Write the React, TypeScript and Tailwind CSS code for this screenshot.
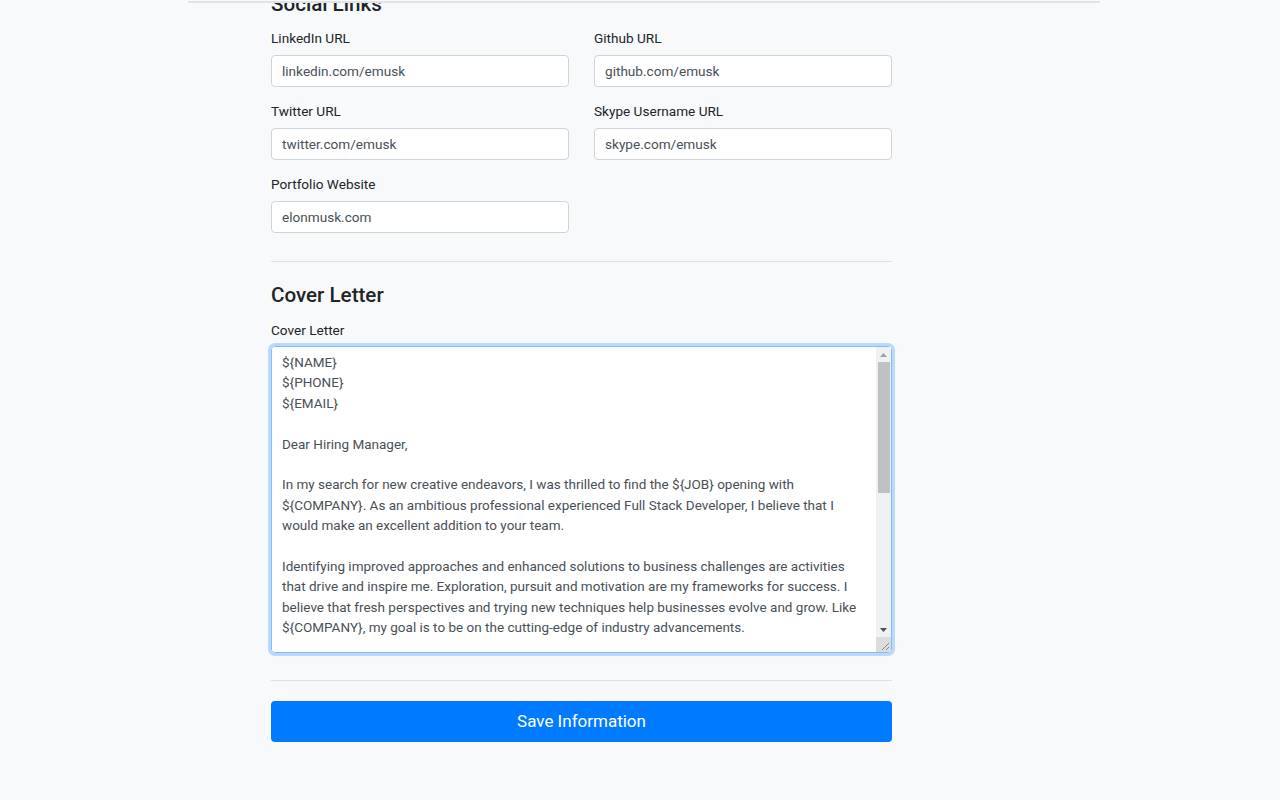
const COVER_LETTER = `\${NAME}
\${PHONE}
\${EMAIL}

Dear Hiring Manager,

In my search for new creative endeavors, I was thrilled to find the \${JOB} opening with \${COMPANY}. As an ambitious professional experienced Full Stack Developer, I believe that I would make an excellent addition to your team.

Identifying improved approaches and enhanced solutions to business challenges are activities that drive and inspire me. Exploration, pursuit and motivation are my frameworks for success. I believe that fresh perspectives and trying new techniques help businesses evolve and grow. Like \${COMPANY}, my goal is to be on the cutting-edge of industry advancements.

Throughout my career I have built and shipped web applications from the first sketch to production, working closely with designers, product owners and other engineers. I enjoy writing clean, well tested code and I take pride in delivering features that users love.

I would welcome the opportunity to discuss how my background and skills could contribute to the continued success of \${COMPANY}. Thank you for your time and consideration.

Sincerely,
\${NAME}`;

interface Field {
  label: string;
  value: string;
}

const SOCIAL_FIELDS: Field[] = [
  { label: "LinkedIn URL", value: "linkedin.com/emusk" },
  { label: "Github URL", value: "github.com/emusk" },
  { label: "Twitter URL", value: "twitter.com/emusk" },
  { label: "Skype Username URL", value: "skype.com/emusk" },
  { label: "Portfolio Website", value: "elonmusk.com" },
];

function TextField({ label, value }: Field) {
  return (
    <div className="flex flex-col">
      <label className="mb-[7px] text-[13.6px] leading-[20px] text-[#212529]">{label}</label>
      <input
        type="text"
        defaultValue={value}
        className="h-[32px] w-full rounded border border-[#ced4da] bg-white px-[10px] text-[13.6px] text-[#495057] outline-none"
      />
    </div>
  );
}

// Classic scrollbar drawn over the textarea (the browser hides its own)
function FakeScrollbar() {
  return (
    <div className="pointer-events-none absolute bottom-px right-px top-px flex w-[15px] flex-col bg-[#f1f1f1]">
      <div className="flex h-[15px] items-center justify-center">
        <svg width="7" height="4" viewBox="0 0 7 4">
          <polygon points="3.5,0 7,4 0,4" fill="#a3a3a3" />
        </svg>
      </div>
      <div className="flex-1">
        <div className="ml-[2px] mr-px h-[131px] bg-[#c1c1c1]" />
      </div>
      <div className="flex h-[15px] items-center justify-center">
        <svg width="7" height="4" viewBox="0 0 7 4">
          <polygon points="0,0 7,0 3.5,4" fill="#505050" />
        </svg>
      </div>
      <div className="h-[15px] bg-[#dcdcdc]">
        <svg width="15" height="15" viewBox="0 0 15 15">
          <line x1="13" y1="6" x2="6" y2="13" stroke="#8a8a8a" strokeWidth="1" />
          <line x1="13" y1="10" x2="10" y2="13" stroke="#8a8a8a" strokeWidth="1" />
        </svg>
      </div>
    </div>
  );
}

export default function App() {
  return (
    <div
      className="relative min-h-screen overflow-hidden bg-[#f8f9fa]"
      style={{ fontFamily: "Roboto, 'Liberation Sans', sans-serif" }}
    >
      {/* edge of the card above, scrolled mostly out of view */}
      <div className="absolute left-[188px] top-0 z-10 h-[3px] w-[912px] border-t border-[#f8f9fa] bg-[#e2e3e5]" />

      <div className="ml-[271px] w-[621px] pb-[58px]">
        <h4 className="mt-[-8px] text-[20.6px] font-medium leading-[24px] text-[#212529]">Social Links</h4>

        <div className="mt-3 grid grid-cols-2 gap-x-[25px] gap-y-[14px]">
          {SOCIAL_FIELDS.map((f) => (
            <TextField key={f.label} {...f} />
          ))}
        </div>

        <hr className="mt-[28px] border-t border-[#dfe0e1]" />

        <h4 className="mt-[21px] text-[20.6px] font-medium leading-[24px] text-[#212529]">Cover Letter</h4>

        <label className="mt-[13px] block text-[13.6px] leading-[20px] text-[#212529]">Cover Letter</label>
        <div className="relative mt-[6px] rounded shadow-[0_0_0_3px_rgba(0,123,255,0.25)]">
          <textarea
            defaultValue={COVER_LETTER}
            className="block h-[307px] w-full resize-none rounded border border-[#80bdff] bg-white py-[5px] pl-[10px] pr-[25px] text-[13.5px] leading-[20.4px] text-[#495057] outline-none"
          />
          <FakeScrollbar />
        </div>

        <hr className="mt-[27px] border-t border-[#dfe0e1]" />

        <button
          type="button"
          className="mt-[20px] h-[41px] w-full rounded bg-[#007bff] text-[17px] text-white"
        >
          Save Information
        </button>
      </div>
    </div>
  );
}
